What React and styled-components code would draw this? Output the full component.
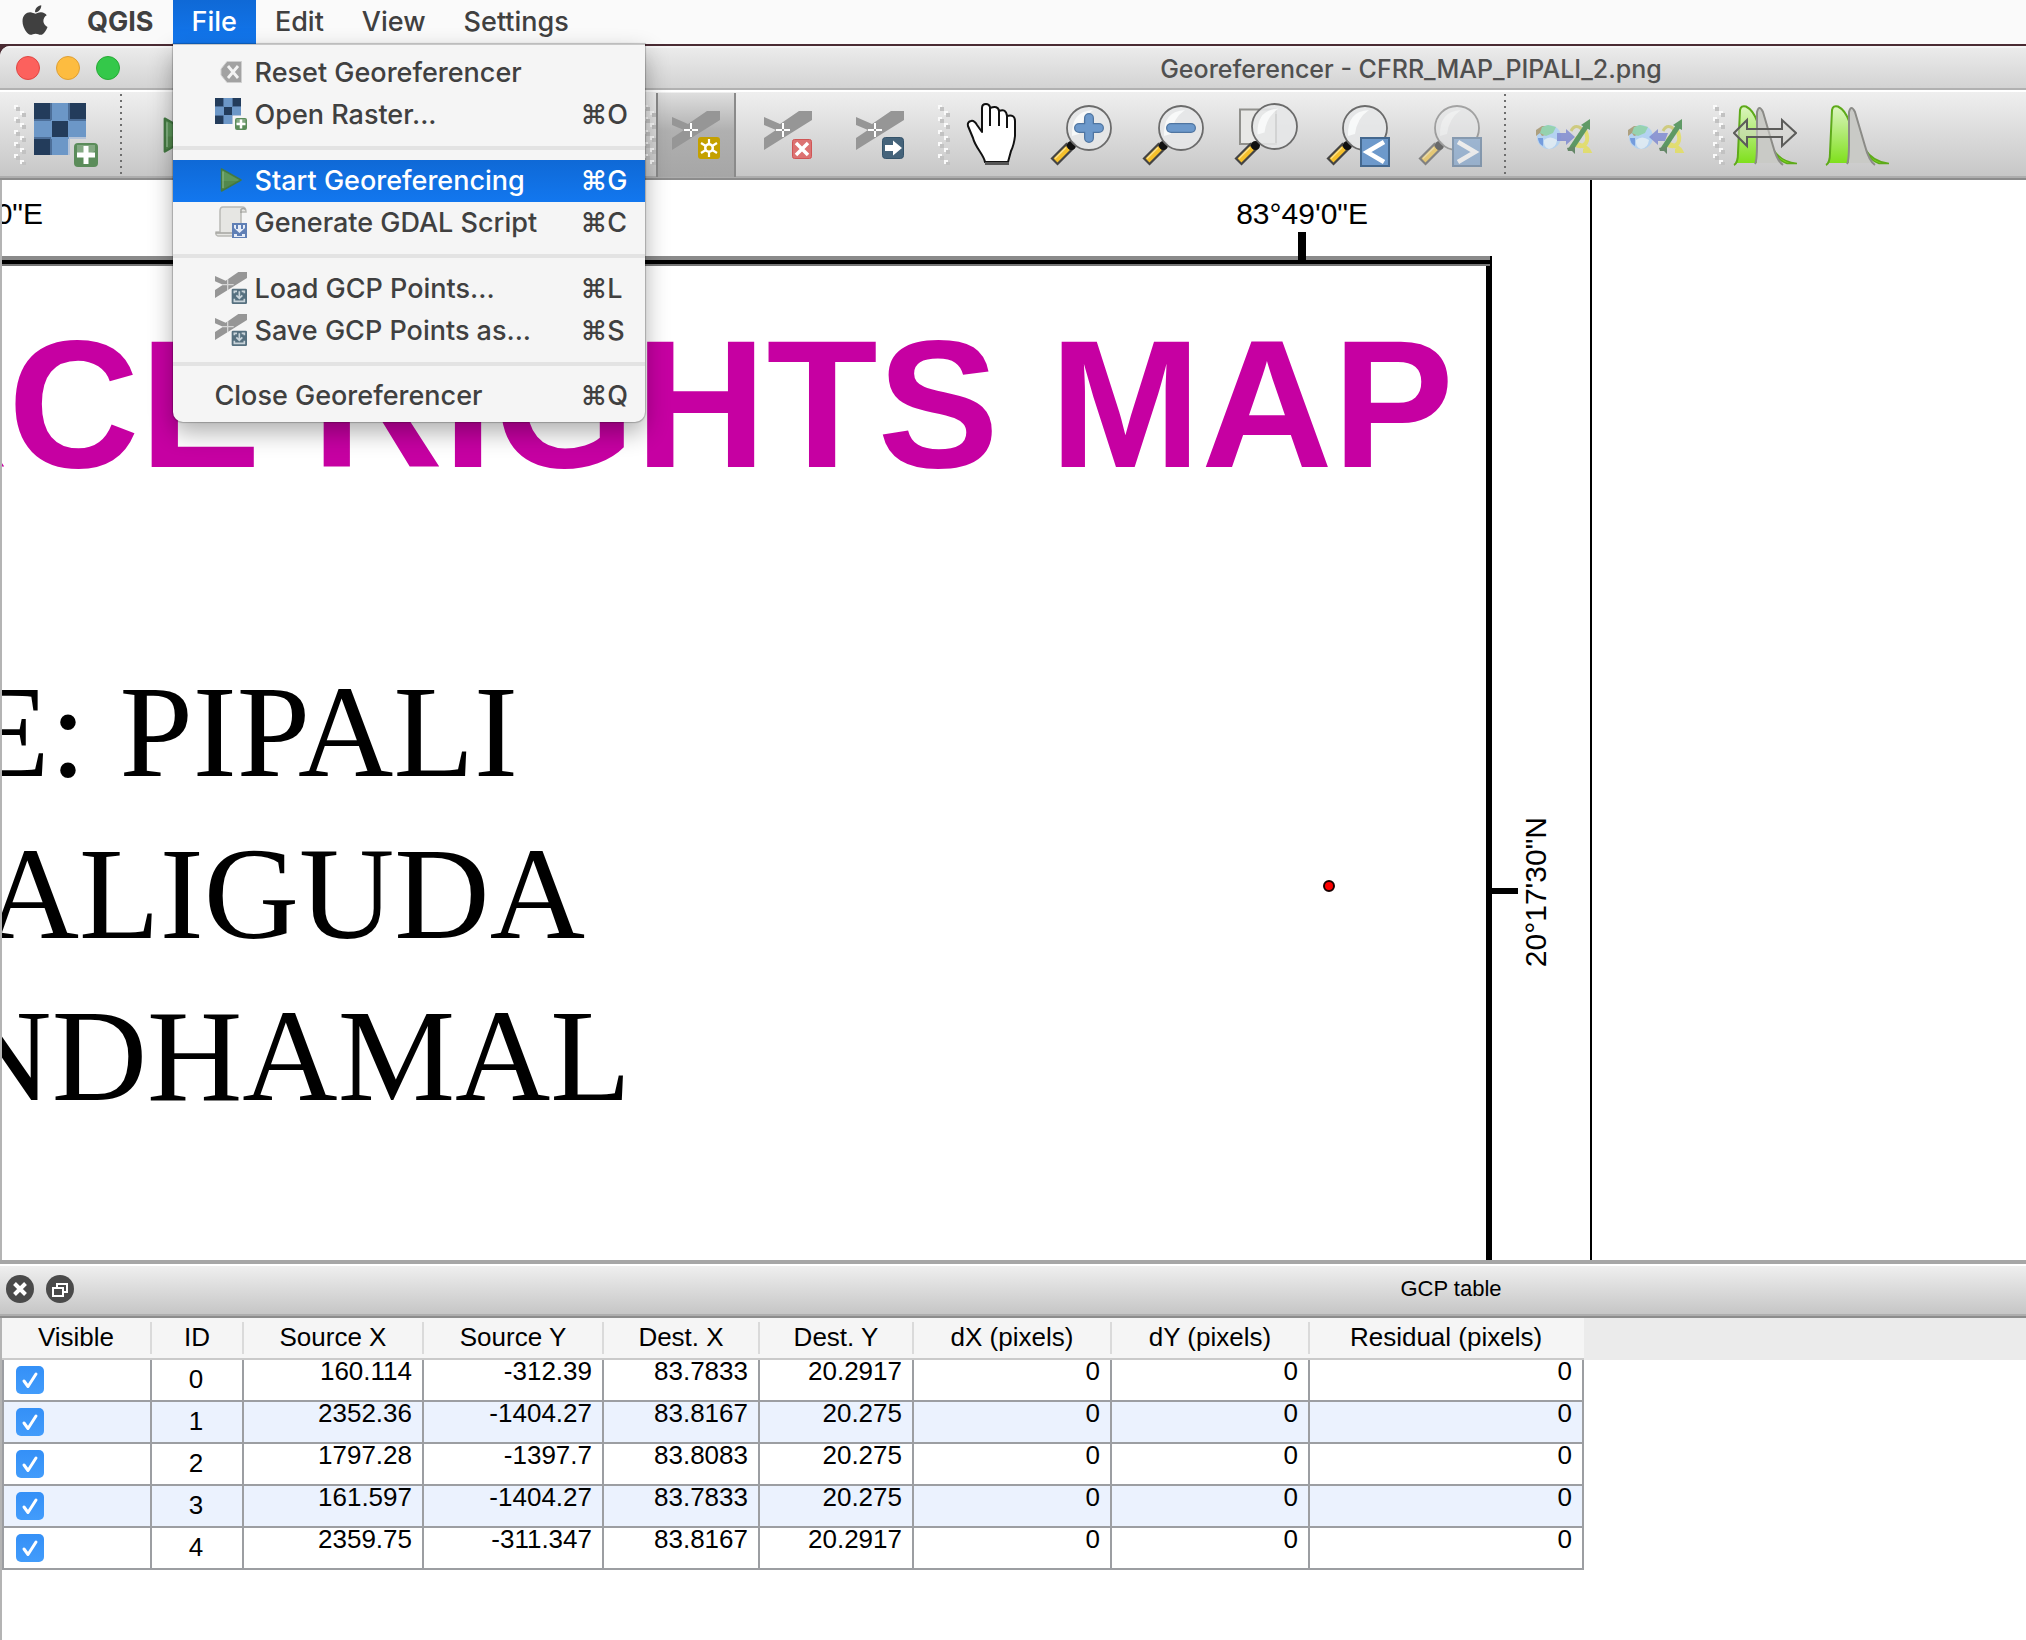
import React from "react";
import styled, { createGlobalStyle, css } from "styled-components";
import { FaApple } from "react-icons/fa";

const GlobalStyle = createGlobalStyle`
  *, *::before, *::after { box-sizing: border-box; }
  body { margin: 0; background: #4a2b33; overflow-x: hidden; }
  button { font: inherit; color: inherit; border: 0; background: none; padding: 0; margin: 0; text-align: left; }
`;

const uiFont = `Inter, "Noto Sans", sans-serif`;
const tableFont = `"Liberation Sans", Arial, sans-serif`;

const Desktop = styled.div`
  display: flex;
  flex-direction: column;
  min-height: 100vh;
  overflow: hidden;
  font-family: ${uiFont};
`;

/* ---------- system menu bar ---------- */

const MenuBar = styled.nav`
  position: relative;
  z-index: 2;
  display: flex;
  flex: none;
  height: 44px;
  background: #fafafa;
  font-size: 27px;
  font-weight: 500;
  color: #404040;
`;

const AppleButton = styled.button`
  display: flex;
  align-items: center;
  width: 67px;
  padding: 0 0 4px 18px;
`;

const MenuSlot = styled.div`
  position: relative;
  display: flex;
`;

const MenuTitle = styled.button`
  padding: 0 19px;
  line-height: 44px;
  font-weight: ${(p) => (p.$strong ? 700 : 500)};
  ${(p) =>
    p.$strong &&
    css`
      padding-left: 20px;
    `}
  ${(p) =>
    p.$open &&
    css`
      color: #fff;
      background: linear-gradient(#0f69d6, #1277ef);
    `}
`;

const Dropdown = styled.div`
  position: absolute;
  top: 44px;
  left: 0;
  width: 472px;
  padding: 7px 0 6px;
  border-top: 1px solid #c8c8c8;
  border-radius: 0 0 10px 10px;
  background: #f5f5f5;
  box-shadow: 0 0 1px 1px rgba(0, 0, 0, 0.22), 0 10px 24px rgba(0, 0, 0, 0.32);
`;

const MenuItem = styled.button`
  display: grid;
  grid-template-columns: ${(p) => (p.$plain ? "1fr 64px" : "32px 1fr 64px")};
  column-gap: 8px;
  align-items: center;
  width: 100%;
  height: ${(p) => (p.$plain ? 40 : 42)}px;
  padding: 0 0 2px 42px;
  white-space: nowrap;
  ${(p) =>
    p.$active &&
    css`
      color: #fff;
      background: linear-gradient(#0f69d6, #1277ef);
    `}
`;

const MenuRule = styled.div`
  height: 4px;
  margin: 10px 0;
  background: #e3e3e3;
`;

/* ---------- window ---------- */

const Window = styled.main`
  display: flex;
  flex: 1;
  flex-direction: column;
  width: calc(100% + 796px);
  margin-top: 2px;
  border-top-left-radius: 10px;
  background: #fff;
  overflow: hidden;
`;

const TitleBar = styled.header`
  display: grid;
  grid-template-columns: 1fr auto 1fr;
  align-items: center;
  flex: none;
  height: 44px;
  padding: 0 16px;
  border-top: 2px solid #f4f4f4;
  border-bottom: 2px solid #b1b1b1;
  background: linear-gradient(#ebebeb, #d3d3d3);
`;

const Lights = styled.div`
  display: flex;
  gap: 16px;
`;

const Light = styled.button`
  width: 24px;
  height: 24px;
  border: 1px solid ${(p) => p.$edge};
  border-radius: 50%;
  background: ${(p) => p.$fill};
`;

const WindowTitle = styled.h1`
  margin: 0;
  padding-top: 2px;
  font-size: 25px;
  font-weight: 500;
  line-height: 32px;
  color: #505050;
`;

const ToolBar = styled.div`
  display: flex;
  flex: none;
  height: 90px;
  padding-left: 14px;
  border-top: 2px solid #fff;
  border-bottom: 2px solid #8c8c8c;
  background: linear-gradient(#efefef, #c6c6c6);
  box-shadow: inset 0 -2px 0 #adadad;
`;

const ToolGroup = styled.div`
  display: flex;
  align-items: center;
  margin-right: 6px;
  min-width: ${(p) => p.$minWidth || 0}px;
`;

const Tool = styled.button`
  display: flex;
  align-items: center;
  justify-content: center;
  width: 80px;
  height: 84px;
  margin-right: 12px;
  ${(p) =>
    p.$pressed &&
    css`
      border: solid #8a8a8a;
      border-width: 0 2px;
      background: linear-gradient(#dedede, #b0b0b0 45%, #a6a6a6);
    `}
  ${(p) =>
    p.$dim &&
    css`
      opacity: 0.55;
    `}
`;

const Divider = styled.div`
  align-self: flex-start;
  width: 2px;
  height: 80px;
  margin: 2px 17px 0 2px;
  background: repeating-linear-gradient(#6e6e6e 0 2px, transparent 2px 6px);
`;

/* ---------- map canvas ---------- */

const Canvas = styled.section`
  position: relative;
  flex: 1;
  min-height: 1080px;
  border-left: 2px solid #b4b4b4;
  background: #fff;
  color: #000;
  overflow: hidden;
`;

const Neatline = styled.div`
  position: absolute;
  top: 76px;
  bottom: 0;
  left: 0;
  width: 1490px;
  border-right: 6px solid #000;

  &::before {
    content: "";
    display: block;
    height: 10px;
    margin-right: -4px;
    background: linear-gradient(#8a8a8a 0 4px, #000 4px 8px, #777 8px);
  }
`;

const PaperEdge = styled.div`
  position: absolute;
  top: 0;
  bottom: 0;
  left: 1588px;
  width: 2px;
  background: #000;
`;

const Tick = styled.div`
  position: absolute;
  top: ${(p) => p.$y}px;
  left: ${(p) => p.$x}px;
  width: ${(p) => p.$w}px;
  height: ${(p) => p.$h}px;
  background: #000;
`;

const MapLabel = styled.div`
  position: absolute;
  top: ${(p) => p.$y}px;
  right: calc(100% - ${(p) => p.$end}px);
  line-height: 1;
  white-space: nowrap;
`;

const MapHeading = styled(MapLabel)`
  font: 700 182px/1 ${tableFont};
  color: #c600a2;
`;

const MapName = styled(MapLabel)`
  font: 132px/1 "Liberation Serif", "Times New Roman", serif;
`;

const Graticule = styled(MapLabel)`
  font: 30px/32px ${tableFont};
  ${(p) =>
    p.$upright &&
    css`
      writing-mode: vertical-rl;
      transform: rotate(180deg);
    `}
`;

const ControlPoint = styled.div`
  position: absolute;
  top: 700px;
  left: 1321px;
  width: 12px;
  height: 12px;
  border: 2px solid #1a0000;
  border-radius: 50%;
  background: #f00;
`;

/* ---------- GCP dock ---------- */

const DockBar = styled.header`
  display: flex;
  align-items: center;
  flex: none;
  height: 58px;
  padding: 0 6px 2px 6px;
  border: solid;
  border-width: 4px 0 2px;
  border-color: #a6a6a6 #000 #8c8c8c;
  background: linear-gradient(#fff 0 2px, #efefef 2px, #c4c4c4);
  box-shadow: inset 0 -2px 0 #adadad;
`;

const DockButton = styled.button`
  display: flex;
  width: 28px;
  height: 28px;
  margin-right: 12px;
  border-radius: 50%;
  background: #4a4a4a;
`;

const DockTitle = styled.h2`
  flex: 1;
  margin: 0;
  font: 400 22px/28px ${tableFont};
  text-align: center;
  color: #000;
`;

const TableArea = styled.section`
  display: flex;
  align-items: flex-start;
  flex: none;
  min-height: 322px;
  border-left: 2px solid #b4b4b4;
  background: #fff;
`;

const HeaderFill = styled.div`
  flex: 1;
  height: 42px;
  background: #ebebeb;
`;

const Table = styled.table`
  flex: none;
  width: 1582px;
  table-layout: fixed;
  border-collapse: separate;
  border-spacing: 0;
  font: 26px/24px ${tableFont};
  color: #000;
`;

const HeadCell = styled.th`
  width: ${(p) => p.$width}px;
  height: 42px;
  padding: 0;
  border-bottom: 2px solid #cacaca;
  background: #f5f5f5;
  font-weight: 400;
  white-space: nowrap;
`;

const HeadLabel = styled.div`
  padding: 3px 0 5px;
  border-right: 2px solid ${(p) => (p.$last ? "transparent" : "#dadada")};
`;

const BodyRow = styled.tr`
  background: ${(p) => (p.$alt ? "#ebf2fe" : "#fff")};
`;

const Cell = styled.td`
  height: 42px;
  padding: 0 10px 0 0;
  border: solid #9c9ea2;
  border-width: 0 2px 2px 0;
  line-height: 22px;
  text-align: right;
  vertical-align: top;
`;

const CheckCell = styled(Cell)`
  padding: 0 0 0 12px;
  border-left-width: 2px;
  vertical-align: middle;
`;

const IdCell = styled(Cell)`
  padding: 0 2px 2px 0;
  text-align: center;
  vertical-align: middle;
`;

const CheckWrap = styled.label`
  display: grid;
  width: 28px;
  height: 28px;

  > * {
    grid-area: 1 / 1;
  }
  > svg {
    pointer-events: none;
  }
`;

const Check = styled.input`
  appearance: none;
  width: 28px;
  height: 28px;
  margin: 0;
  border-radius: 5px;
  background: linear-gradient(#3490f7, #429cfb);
`;

/* ---------- drawings ---------- */

const Grip = () => (
  <svg width="12" height="60" viewBox="0 0 12 60" aria-hidden="true">
    {[0, 12, 25, 37, 49].map((y) => (
      <g key={y}>
        <path fill="#fafafa" d={`M0 ${y}h4v4h-4zM6 ${y + 6}h4v4h-4z`} />
        <path fill="#c2c2c2" d={`M2 ${y + 2}h4v4h-4zM8 ${y + 8}h4v4h-4z`} />
      </g>
    ))}
  </svg>
);

const RasterIcon = ({ size = 64 }) => (
  <svg width={size} height={size} viewBox="0 0 64 64" aria-hidden="true">
    <path fill="#6c97c7" d="M0 0h52v36h-17v16h-35z" />
    <path fill="#233c5b" d="M0 0h16v16h-16zM36 0h16v16h-16zM18 18h16v16h-16zM0 36h16v16h-16z" />
    <path fill="none" stroke="#4d6f99" strokeWidth="2" d="M17 0v17M35 0v17M17 36v16M0 17h17M35 17h17M0 35h17" />
    <path fill="#b4c3d8" d="M35 34h17v2h-17zM34 36h2v16h-2z" />
    <rect x="40" y="40" width="24" height="24" rx="4" fill="#5b8c5a" />
    <path fill="#fff" opacity=".25" d="M43 42h18v6q-6 4-18 4z" />
    <path fill="#fff" d="M49.500 43h5v6.500h6.500v5h-6.500v6.500h-5v-6.500h-6.500v-5h6.500z" />
  </svg>
);

const PlayIcon = ({ size = 64 }) => (
  <svg width={size} height={size} viewBox="0 0 64 64" aria-hidden="true">
    <path d="M13 10L52 32L13 54z" fill="#5c965a" stroke="#437a42" strokeWidth="3" strokeLinejoin="round" />
    <path d="M13 34H49L14 53z" fill="#47783f" opacity=".45" />
    <path d="M16 15V48" stroke="#8fbb8e" strokeWidth="2" />
  </svg>
);

const ResetIcon = () => (
  <svg width="32" height="32" viewBox="0 0 32 32" aria-hidden="true">
    <path fill="#a2a2a2" stroke="#cfcfcf" strokeWidth="1" d="M12 5.500h14.500v21h-14.500l-6-7.500v-6z" />
    <path fill="none" stroke="#f3f3f3" strokeWidth="2.800" d="M13 10l10 12M23 10l-10 12" />
  </svg>
);

const ScriptIcon = () => (
  <svg width="32" height="32" viewBox="0 0 32 32" aria-hidden="true">
    <path fill="#e6e6e3" stroke="#b9b9b5" strokeWidth="1.500" d="M8 1h19q4 0 4 5h-5v20H20v4H3q-3-1-2-4h4V5q0-4 3-4z" />
    <path fill="none" stroke="#a5a5a1" strokeWidth="1.500" d="M26 7V3.500q2-2 4.500 0M1 27h17" />
    <rect x="17" y="17" width="15" height="15" fill="#5f7fb5" />
    <path fill="#e6edf8" d="M19 19h2v4h2v-4h3v4h2v-4h2v3l-5.500 5l-5.500-5zM19 28h3v2h5v-2h3v3h-11z" />
  </svg>
);

const Roads = ({ cross }) => (
  <>
    <path fill="#969696" d="M0 6L16 13L35 0H48V9L0 39V27L12 19L0 14z" />
    {cross && <path stroke="#fff" strokeWidth="2" fill="none" d="M19 12v6M19 20v6M12 19h6M20 19h6" />}
    {!cross && <path stroke="#f0f0f0" strokeWidth="2" fill="none" d="M19 11v17M11 19h17" opacity=".7" />}
  </>
);

const MenuPointsIcon = () => (
  <svg width="32" height="32" viewBox="0 0 48 48" aria-hidden="true">
    <Roads />
    <rect x="25" y="25" width="23" height="23" rx="2" fill="#56707f" />
    <path fill="none" stroke="#c9d4da" strokeWidth="2.500" d="M29 32v-3h4M44 32v-3h-4M36.500 29v10M32 35l4.500 4.500l4.500-4.500M29 40v4h15v-4" />
  </svg>
);

const AddPointIcon = () => (
  <svg width="48" height="48" viewBox="0 0 48 48" aria-hidden="true">
    <Roads cross />
    <rect x="26" y="26" width="22" height="22" rx="3" fill="#c4a000" />
    <path stroke="#fff" strokeWidth="2.200" fill="none" d="M37 28v18M29 32l16 10M45 32l-16 10" />
    <circle cx="37" cy="37" r="5" fill="#fff" />
    <circle cx="37" cy="37" r="2.500" fill="#c4a000" />
  </svg>
);

const DeletePointIcon = () => (
  <svg width="48" height="48" viewBox="0 0 48 48" aria-hidden="true">
    <Roads cross />
    <rect x="28.500" y="28.500" width="19" height="19" rx="2" fill="#dc7272" stroke="#cf5555" />
    <path stroke="#fff" strokeWidth="3.500" fill="none" d="M32 32l12 12M44 32l-12 12" />
  </svg>
);

const MovePointIcon = () => (
  <svg width="48" height="48" viewBox="0 0 48 48" aria-hidden="true">
    <Roads cross />
    <rect x="26.500" y="26.500" width="21" height="21" rx="3" fill="#45637a" stroke="#34536a" />
    <path fill="#fff" d="M29 34h8v-4.500l9 7.500l-9 7.500v-4.500h-8z" />
  </svg>
);

const HandIcon = () => (
  <svg width="64" height="64" viewBox="0 0 64 64" aria-hidden="true">
    <path
      fill="#fff"
      stroke="#111"
      strokeWidth="2"
      strokeLinejoin="round"
      d="M27 59C26 52 17 44 15 35L10 23Q9 19 13 18Q16 17 19 22L24 29V5Q24 1 28 1Q31 1 32 4V5Q40 2 41 8Q48 5 49 13Q57 11 57 18V33Q56 42 53 48L50 59z"
    />
    <path fill="none" stroke="#111" strokeWidth="2" d="M32 5V23M41 8V23M49 13V25" />
    <path stroke="#555" strokeWidth="3" d="M27 60.500H51" />
  </svg>
);

const Lens = ({ cx = 39, cy = 25, r = 22 }) => (
  <>
    <path stroke="#444" strokeWidth="10" d="M20 43L4 59" />
    <path stroke="#f5c02c" strokeWidth="5.500" d="M18 45L5.500 57.500" />
    <path stroke="#fbe08a" strokeWidth="1.500" d="M16 44.500L5 55.500" />
    <circle cx="21.500" cy="42.500" r="4.500" fill="#111" />
    <circle cx={cx} cy={cy} r={r} fill="#e6e7e8" fillOpacity=".88" stroke="#6b6b6b" strokeWidth="1.800" />
    <path
      d={`M${cx - 17} ${cy + 8}Q${cx - 18} ${cy - 17} ${cx + 4} ${cy - 18}Q${cx - 8} ${cy - 10} ${cx - 10} ${cy + 6}z`}
      fill="#fafcfc"
      opacity=".85"
    />
  </>
);

const ZoomInIcon = () => (
  <svg width="64" height="64" viewBox="0 0 64 64" aria-hidden="true">
    <Lens />
    <path stroke="#4f75a1" strokeWidth="10" strokeLinecap="round" d="M39 15V35M29 25H49" />
    <path stroke="#6d99cb" strokeWidth="7.500" strokeLinecap="round" d="M39 15V35M29 25H49" />
  </svg>
);

const ZoomOutIcon = () => (
  <svg width="64" height="64" viewBox="0 0 64 64" aria-hidden="true">
    <Lens />
    <path stroke="#4f75a1" strokeWidth="10" strokeLinecap="round" d="M29 25H49" />
    <path stroke="#6d99cb" strokeWidth="7.500" strokeLinecap="round" d="M29 25H49" />
  </svg>
);

const ZoomLayerIcon = () => (
  <svg width="64" height="64" viewBox="0 0 64 64" aria-hidden="true">
    <rect x="6" y="6.500" width="36" height="34.500" fill="#e8e8e6" stroke="#90908c" strokeWidth="2" />
    <Lens cx={40.5} cy={23.5} r={22.5} />
    <path stroke="#cfcfcf" strokeWidth="1.500" d="M42 11V40" />
  </svg>
);

const ZoomStepIcon = ({ next }) => (
  <svg width="64" height="64" viewBox="0 0 64 64" aria-hidden="true">
    <Lens />
    <rect x="35" y="35" width="28" height="28" fill="#6d99cb" stroke="#44688f" strokeWidth="2" />
    <path fill="none" stroke="#fff" strokeWidth="4.500" d={next ? "M40 39L57 49L40 59" : "M58 39L41 49L58 59"} />
  </svg>
);

const LinkIcon = ({ back }) => (
  <svg width="64" height="64" viewBox="0 0 64 64" opacity=".72" aria-hidden="true">
    <circle cx="18" cy="34" r="12" fill="#a6d0fa" />
    <path fill="#dff0fd" d="M13 37q6-5 13 0q-1 8-8 9q-6-2-5-9z" />
    <path fill="#4f86e0" d="M7 35h5v8q-5-3-5-8z" />
    <path fill="#9c8a5c" d="M5 33V27L11 23H20L18 31L11 33L9 30z" />
    <path fill="#7bcf9f" d="M9 30L11 24L17 22L25 24L22 30L15 33z" />
    <path fill="none" stroke="#c9c45c" strokeWidth="3" d="M40 28Q43 22 48 24Q51 25 51 29" />
    <path fill="none" stroke="#e6e04c" strokeWidth="4" d="M54 27Q58 35 55 40Q52 45 44 42M47 34Q42 40 49 42Q56 44 58 48H52" />
    <path stroke="#2f8038" strokeWidth="5" d="M40 46L56 22" />
    <path fill="#2f8038" d="M59 16V27L50 22z" />
    <path fill="#3c6b3f" d="M36 45L44 43L44 51L41 48H37z" />
    <path fill="#5f6fce" opacity=".85" d={back ? "M26 34l9-8v4h10l-3 8h-7v4z" : "M44 34l-9-8v4H26v8h9v4z"} />
  </svg>
);

const HistogramIcon = ({ arrows }) => (
  <svg width="64" height="64" viewBox="0 0 64 64" aria-hidden="true">
    <defs>
      <linearGradient id={arrows ? "greenA" : "greenB"} x1="0" y1="0" x2="0" y2="1">
        <stop offset="0" stopColor="#dcf5c0" />
        <stop offset="1" stopColor="#7fe01c" />
      </linearGradient>
    </defs>
    <path fill={`url(#${arrows ? "greenA" : "greenB"})`} d="M3 60Q5 55 7 6Q9 2 14 4Q20 8 24 18V60z" />
    <path fill="none" stroke="#5eaa1a" strokeWidth="2" d="M1 62Q5 60 5 50L7 7Q8 2 13 3.500Q20 7 24 18" />
    <path fill="#7fe01c" stroke="#5eaa1a" strokeWidth="1.500" d="M40 46Q48 59 64 60.500H54Q45 58 40 46z" />
    <path fill="#c9cac6" d="M24 60V10Q26 0 31 10L40 45Q44 58 49 60z" />
    <path fill="none" stroke="#8b8b87" strokeWidth="2" d="M22 61Q24 58 24 40V9Q26 1 30 9L40 43Q44 58 50 62" />
    {arrows && (
      <path
        fill="#d6d6d0"
        fillOpacity=".55"
        stroke="#5c5c5a"
        strokeWidth="2"
        d="M1 30L14 17V26H49V17L63 30L49 43V34H14V43z"
      />
    )}
  </svg>
);

const CloseGlyph = () => (
  <svg width="28" height="28" viewBox="0 0 28 28" aria-hidden="true">
    <path stroke="#fff" strokeWidth="4" d="M8.500 8.500l11 11M19.500 8.500l-11 11" />
  </svg>
);

const FloatGlyph = () => (
  <svg width="28" height="28" viewBox="0 0 28 28" aria-hidden="true">
    <path fill="none" stroke="#fff" strokeWidth="2" d="M7 13h10v8h-10zM11 12V9h10v8h-3" />
  </svg>
);

const Tickmark = () => (
  <svg width="28" height="28" viewBox="0 0 28 28" aria-hidden="true">
    <path fill="none" stroke="#fff" strokeWidth="3" strokeLinecap="round" strokeLinejoin="round" d="M8 15l4 5.500L20 8" />
  </svg>
);

/* ---------- data ---------- */

const fileMenu = [
  [
    { label: "Reset Georeferencer", icon: <ResetIcon /> },
    { label: "Open Raster...", icon: <RasterIcon size={32} />, keys: "⌘O" },
  ],
  [
    { label: "Start Georeferencing", icon: <PlayIcon size={32} />, keys: "⌘G", active: true },
    { label: "Generate GDAL Script", icon: <ScriptIcon />, keys: "⌘C" },
  ],
  [
    { label: "Load GCP Points...", icon: <MenuPointsIcon />, keys: "⌘L" },
    { label: "Save GCP Points as...", icon: <MenuPointsIcon />, keys: "⌘S" },
  ],
  [{ label: "Close Georeferencer", keys: "⌘Q" }],
];

const columns = [
  ["Visible", 150],
  ["ID", 92],
  ["Source X", 180],
  ["Source Y", 180],
  ["Dest. X", 156],
  ["Dest. Y", 154],
  ["dX (pixels)", 198],
  ["dY (pixels)", 198],
  ["Residual (pixels)", 274],
];

const points = [
  ["160.114", "-312.39", "83.7833", "20.2917", "0", "0", "0"],
  ["2352.36", "-1404.27", "83.8167", "20.275", "0", "0", "0"],
  ["1797.28", "-1397.7", "83.8083", "20.275", "0", "0", "0"],
  ["161.597", "-1404.27", "83.7833", "20.275", "0", "0", "0"],
  ["2359.75", "-311.347", "83.8167", "20.2917", "0", "0", "0"],
];

/* ---------- app ---------- */

function FileMenu() {
  return (
    <Dropdown role="menu" aria-label="File">
      {fileMenu.map((section, i) => (
        <React.Fragment key={i}>
          {i > 0 && <MenuRule />}
          {section.map((item) => (
            <MenuItem key={item.label} role="menuitem" $active={item.active} $plain={!item.icon}>
              {item.icon}
              <span>{item.label}</span>
              <span>{item.keys}</span>
            </MenuItem>
          ))}
        </React.Fragment>
      ))}
    </Dropdown>
  );
}

function GcpTable() {
  return (
    <Table>
      <thead>
        <tr>
          {columns.map(([name, width], i) => (
            <HeadCell key={name} $width={width} scope="col">
              <HeadLabel $last={i === columns.length - 1}>{name}</HeadLabel>
            </HeadCell>
          ))}
        </tr>
      </thead>
      <tbody>
        {points.map((values, id) => (
          <BodyRow key={id} $alt={id % 2 === 1}>
            <CheckCell>
              <CheckWrap>
                <Check type="checkbox" defaultChecked aria-label={`Point ${id} visible`} />
                <Tickmark />
              </CheckWrap>
            </CheckCell>
            <IdCell>{id}</IdCell>
            {values.map((value, i) => (
              <Cell key={i}>{value}</Cell>
            ))}
          </BodyRow>
        ))}
      </tbody>
    </Table>
  );
}

export default function App() {
  return (
    <Desktop>
      <GlobalStyle />
      <MenuBar>
        <AppleButton aria-label="Apple menu">
          <FaApple size={34} />
        </AppleButton>
        <MenuTitle $strong>QGIS</MenuTitle>
        <MenuSlot>
          <MenuTitle $open aria-expanded="true">
            File
          </MenuTitle>
          <FileMenu />
        </MenuSlot>
        <MenuTitle>Edit</MenuTitle>
        <MenuTitle>View</MenuTitle>
        <MenuTitle>Settings</MenuTitle>
      </MenuBar>

      <Window>
        <TitleBar>
          <Lights>
            <Light aria-label="Close" $fill="#fc615d" $edge="#df4744" />
            <Light aria-label="Minimize" $fill="#fdbc40" $edge="#de9f34" />
            <Light aria-label="Zoom" $fill="#34c84a" $edge="#27aa35" />
          </Lights>
          <WindowTitle>Georeferencer - CFRR_MAP_PIPALI_2.png</WindowTitle>
        </TitleBar>

        <ToolBar role="toolbar">
          <ToolGroup $minWidth={624}>
            <Grip />
            <Tool aria-label="Open raster"><RasterIcon /></Tool>
            <Divider />
            <Tool aria-label="Start georeferencing"><PlayIcon size={48} /></Tool>
          </ToolGroup>
          <ToolGroup>
            <Grip />
            <Tool aria-label="Add point" aria-pressed="true" $pressed><AddPointIcon /></Tool>
            <Tool aria-label="Delete point"><DeletePointIcon /></Tool>
            <Tool aria-label="Move point"><MovePointIcon /></Tool>
          </ToolGroup>
          <ToolGroup>
            <Grip />
            <Tool aria-label="Pan"><HandIcon /></Tool>
            <Tool aria-label="Zoom in"><ZoomInIcon /></Tool>
            <Tool aria-label="Zoom out"><ZoomOutIcon /></Tool>
            <Tool aria-label="Zoom to layer"><ZoomLayerIcon /></Tool>
            <Tool aria-label="Zoom last"><ZoomStepIcon /></Tool>
            <Tool aria-label="Zoom next" $dim><ZoomStepIcon next /></Tool>
            <Divider />
            <Tool aria-label="Link georeferencer to QGIS"><LinkIcon /></Tool>
            <Tool aria-label="Link QGIS to georeferencer"><LinkIcon back /></Tool>
          </ToolGroup>
          <ToolGroup>
            <Grip />
            <Tool aria-label="Full histogram stretch"><HistogramIcon arrows /></Tool>
            <Tool aria-label="Local histogram stretch"><HistogramIcon /></Tool>
          </ToolGroup>
        </ToolBar>

        <Canvas>
          <Neatline />
          <PaperEdge />
          <Tick $x={1296} $y={52} $w={8} $h={32} />
          <Tick $x={1490} $y={708} $w={26} $h={6} />
          <Graticule $y={18} $end={41}>0"E</Graticule>
          <Graticule $y={18} $end={1366}>83°49'0"E</Graticule>
          <Graticule $y={637} $end={1550} $upright>20°17'30"N</Graticule>
          <MapHeading $y={133} $end={1452}>RCE RIGHTS MAP</MapHeading>
          <MapName $y={486} $end={516}>E: PIPALI</MapName>
          <MapName $y={648} $end={583}>ALIGUDA</MapName>
          <MapName $y={810} $end={629}>NDHAMAL</MapName>
          <ControlPoint />
        </Canvas>

        <DockBar>
          <DockButton aria-label="Close panel"><CloseGlyph /></DockButton>
          <DockButton aria-label="Float panel"><FloatGlyph /></DockButton>
          <DockTitle>GCP table</DockTitle>
        </DockBar>
        <TableArea>
          <GcpTable />
          <HeaderFill />
        </TableArea>
      </Window>
    </Desktop>
  );
}
